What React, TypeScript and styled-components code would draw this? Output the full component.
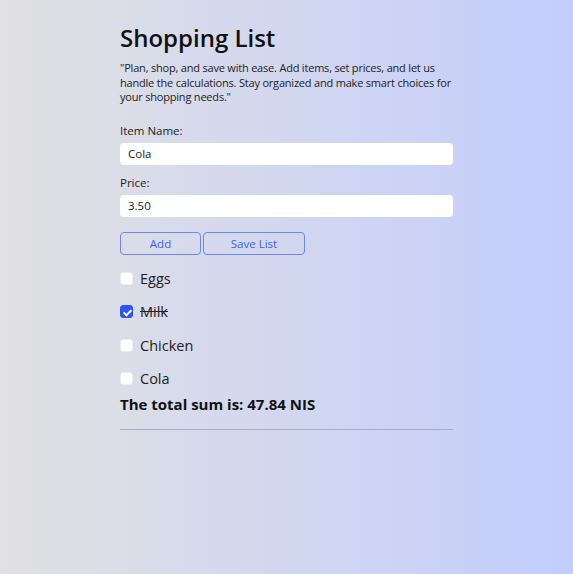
import { useState } from "react";
import styled, { createGlobalStyle } from "styled-components";

const GlobalStyle = createGlobalStyle`
  html, body {
    margin: 0;
    padding: 0;
  }
  body {
    min-height: 100vh;
    background: linear-gradient(to right, #e1e1e2, #c3cdfd);
    font-family: "Open Sans", "Noto Sans", sans-serif;
    color: #1a1a1a;
  }
`;

type Item = { name: string; price: number; done: boolean };

const initialItems: Item[] = [
  { name: "Eggs", price: 12.9, done: false },
  { name: "Milk", price: 6.5, done: true },
  { name: "Chicken", price: 24.94, done: false },
  { name: "Cola", price: 3.5, done: false },
];

export default function App() {
  const [items, setItems] = useState<Item[]>(initialItems);
  const [name, setName] = useState("Cola");
  const [price, setPrice] = useState("3.50");

  const toggle = (i: number) =>
    setItems(items.map((it, idx) => (idx === i ? { ...it, done: !it.done } : it)));

  return (
    <>
      <GlobalStyle />
      <Page>
        <Title>Shopping List</Title>
        <Intro>
          "Plan, shop, and save with ease. Add items, set prices, and let us
          handle the calculations. Stay organized and make smart choices for
          your shopping needs."
        </Intro>

        <Field>
          <Label>Item Name:</Label>
          <Input value={name} onChange={(e) => setName(e.target.value)} />
        </Field>
        <Field>
          <Label>Price:</Label>
          <Input value={price} onChange={(e) => setPrice(e.target.value)} />
        </Field>

        <Buttons>
          <Button $width={81}>Add</Button>
          <Button $width={102}>Save List</Button>
        </Buttons>

        <List>
          {items.map((it, i) => (
            <Row key={it.name}>
              <Check type="checkbox" checked={it.done} onChange={() => toggle(i)} />
              <ItemName $done={it.done}>{it.name}</ItemName>
            </Row>
          ))}
        </List>

        <Total>The total sum is: 47.84 NIS</Total>
        <Divider />
      </Page>
    </>
  );
}

const Page = styled.div`
  width: 333px;
  margin: 0 auto;
  padding-top: 23px;
`;

const Title = styled.h1`
  margin: 0;
  font-size: 24px;
  line-height: 30px;
  font-weight: 600;
  color: #111;
`;

const Intro = styled.p`
  margin: 8px 0 19px;
  font-size: 11px;
  letter-spacing: -0.2px;
  line-height: 14.5px;
  color: #222;
`;

const Field = styled.div`
  display: flex;
  flex-direction: column;
  gap: 5px;
  margin-bottom: 11px;
`;

const Label = styled.label`
  font-size: 11.5px;
  line-height: 14px;
  color: #222;
`;

const Input = styled.input`
  box-sizing: border-box;
  width: 100%;
  height: 22px;
  padding: 0 8px;
  border: none;
  border-radius: 4px;
  background: #fff;
  font-family: inherit;
  font-size: 11.5px;
  color: #222;
  outline: none;
`;

const Buttons = styled.div`
  display: flex;
  gap: 2px;
  margin-top: 15px;
`;

const Button = styled.button<{ $width: number }>`
  box-sizing: border-box;
  width: ${(p) => p.$width}px;
  height: 23px;
  padding: 0;
  background: transparent;
  border: 1px solid #6d86fb;
  border-radius: 4px;
  color: #3d5ef5;
  font-family: inherit;
  font-size: 11.5px;
  cursor: pointer;
`;

const List = styled.ul`
  list-style: none;
  margin: 7px 0 0;
  padding: 0;
`;

const Row = styled.li`
  display: flex;
  align-items: center;
  gap: 7px;
  height: 33.5px;
`;

const Check = styled.input`
  appearance: none;
  position: relative;
  flex: none;
  margin: 0;
  width: 13px;
  height: 13px;
  border-radius: 3px;
  background: #fff;
  border: 1px solid #ececf0;
  box-sizing: border-box;
  cursor: pointer;

  &:checked {
    background: #2f52f5;
    border-color: #2f52f5;
  }

  &:checked::after {
    content: "";
    position: absolute;
    left: 3.5px;
    top: 1.5px;
    width: 3px;
    height: 6px;
    border: solid #fff;
    border-width: 0 2px 2px 0;
    transform: rotate(45deg);
  }
`;

const ItemName = styled.span<{ $done: boolean }>`
  font-size: 14.5px;
  color: #222;
  text-decoration: ${(p) => (p.$done ? "line-through" : "none")};
`;

const Total = styled.div`
  margin-top: -2px;
  font-size: 15px;
  font-weight: 700;
  color: #111;
`;

const Divider = styled.hr`
  margin: 15px 0 0;
  border: none;
  border-top: 1px solid #a9aec4;
`;
